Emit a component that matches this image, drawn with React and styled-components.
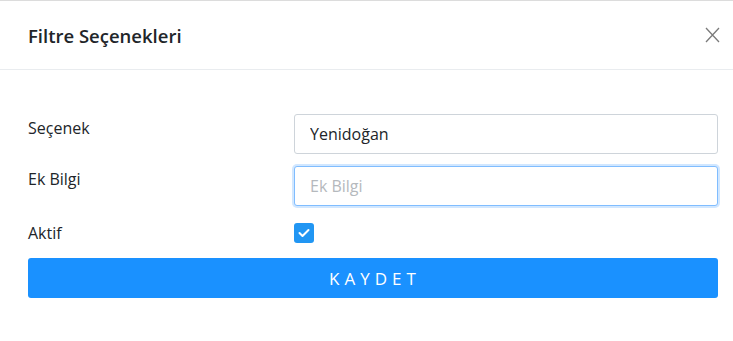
import React, { useState } from 'react';
import styled, { createGlobalStyle } from 'styled-components';

const GlobalStyle = createGlobalStyle`
  html, body {
    margin: 0;
    padding: 0;
    background: #fff;
  }
  body {
    font-family: "Open Sans", "Noto Sans", sans-serif;
    color: #212529;
  }
  * { box-sizing: border-box; }
`;

const Modal = styled.div`
  width: 733px;
  height: 341px;
  border-top: 1px solid #dcdcdc;
  background: #fff;
`;

const Header = styled.div`
  display: flex;
  align-items: center;
  justify-content: space-between;
  height: 69px;
  padding: 0 11px 0 28px;
  border-bottom: 1px solid #e9ecef;
`;

const Title = styled.h5`
  margin: 0;
  font-size: 18.5px;
  font-weight: 600;
  color: #212529;
  letter-spacing: 0;
`;

const CloseButton = styled.button`
  display: flex;
  align-items: center;
  justify-content: center;
  width: 20px;
  height: 20px;
  padding: 0;
  border: none;
  background: transparent;
  cursor: pointer;
`;

const Body = styled.form`
  display: flex;
  flex-direction: column;
  padding: 44px 15px 0 28px;
`;

const Row = styled.div`
  display: grid;
  grid-template-columns: 266px 424px;
  align-items: start;
  margin-bottom: ${(p) => p.gap || '12px'};
`;

const Label = styled.label`
  font-size: 16px;
  line-height: 22px;
  padding-top: ${(p) => p.top || '3px'};
  color: #212529;
`;

const Input = styled.input`
  width: 424px;
  height: 40px;
  padding: 0 15px;
  font-family: inherit;
  font-size: 16px;
  color: #212529;
  caret-color: #212529;
  border: 1px solid #ced4da;
  border-radius: 3px;
  outline: none;
  &:focus {
    border-color: #80bdff;
    box-shadow: 0 0 0 2px rgba(0, 123, 255, 0.18);
  }
  &::placeholder {
    color: #b5b9bd;
  }
`;

const CheckBox = styled.span`
  display: inline-flex;
  align-items: center;
  justify-content: center;
  width: 20px;
  height: 20px;
  margin-top: 1px;
  border-radius: 3px;
  background: #2196f3;
`;

const SaveButton = styled.button`
  width: 690px;
  height: 40px;
  border: none;
  border-radius: 3px;
  background: #1a91ff;
  color: #fff;
  font-family: "Open Sans", sans-serif;
  font-size: 17px;
  font-weight: 400;
  letter-spacing: 5px;
  padding-left: 10px;
  cursor: pointer;
`;

export default function App() {
  const [name, setName] = useState('Yenidoğan');
  const [info, setInfo] = useState('');

  return (
    <Modal>
      <GlobalStyle />
      <Header>
        <Title>Filtre Seçenekleri</Title>
        <CloseButton type="button" aria-label="Kapat">
          <svg width="15" height="16" viewBox="0 0 15 16">
            <path d="M1 1L14 15M14 1L1 15" stroke="#7a7a7a" strokeWidth="1.3" fill="none" />
          </svg>
        </CloseButton>
      </Header>
      <Body onSubmit={(e) => e.preventDefault()}>
        <Row>
          <Label>Seçenek</Label>
          <Input value={name} onChange={(e) => setName(e.target.value)} />
        </Row>
        <Row gap="16px">
          <Label top="2px">Ek Bilgi</Label>
          <Input autoFocus placeholder="Ek Bilgi" value={info} onChange={(e) => setInfo(e.target.value)} />
        </Row>
        <Row gap="14px">
          <Label top="0">Aktif</Label>
          <CheckBox>
            <svg width="12" height="10" viewBox="0 0 12 10">
              <path d="M1.5 5L4.5 8L10.5 2" stroke="#fff" strokeWidth="2" fill="none" strokeLinecap="round" strokeLinejoin="round" />
            </svg>
          </CheckBox>
        </Row>
        <SaveButton type="submit">KAYDET</SaveButton>
      </Body>
    </Modal>
  );
}
